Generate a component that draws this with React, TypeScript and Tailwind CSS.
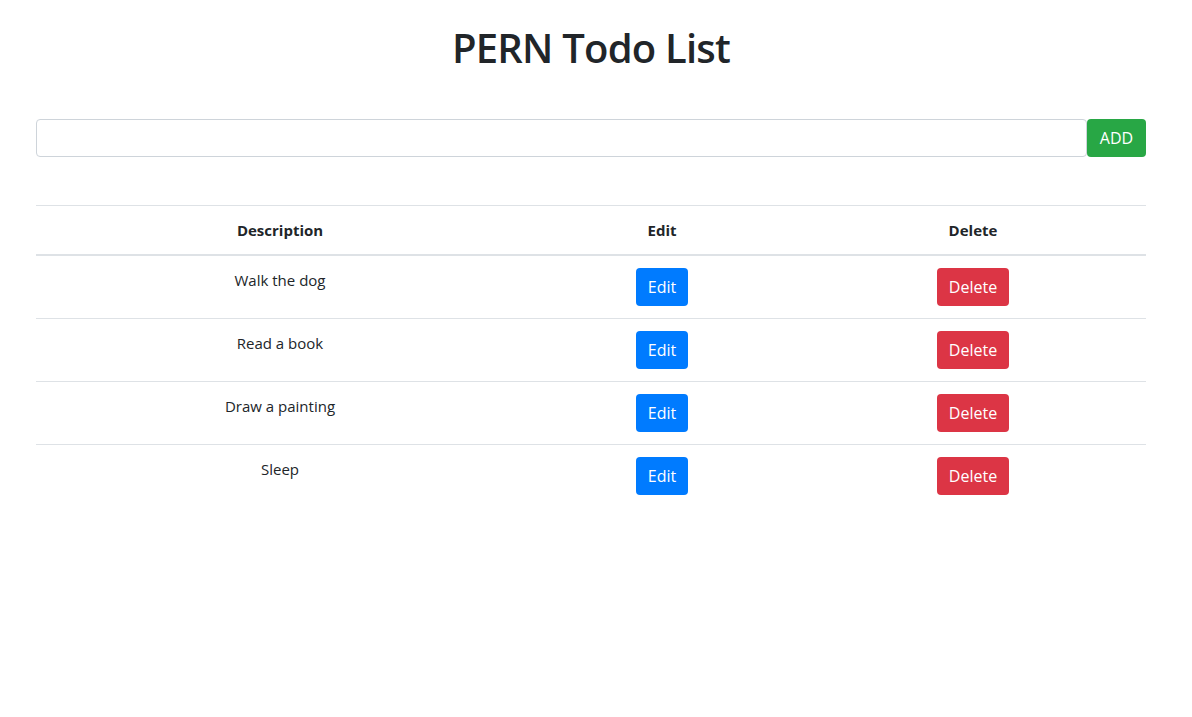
import React, { useState } from "react";

const initialTodos = [
  { id: 1, description: "Walk the dog" },
  { id: 2, description: "Read a book" },
  { id: 3, description: "Draw a painting" },
  { id: 4, description: "Sleep" },
];

export default function App() {
  const [todos, setTodos] = useState(initialTodos);
  const [description, setDescription] = useState("");

  const addTodo = (e: React.FormEvent) => {
    e.preventDefault();
    if (!description.trim()) return;
    setTodos((t) => [...t, { id: Date.now(), description }]);
    setDescription("");
  };

  const deleteTodo = (id: number) =>
    setTodos((t) => t.filter((todo) => todo.id !== id));

  return (
    <div
      className="min-h-[717px] bg-white text-[#212529]"
      style={{ fontFamily: '"Open Sans", "Noto Sans", sans-serif' }}
    >
      <div className="ml-[36px] w-[1110px]">
        {/* Title */}
        <h1 className="pt-[24px] text-center text-[40px] leading-[48px] font-semibold tracking-[-0.8px]">
          PERN Todo List
        </h1>

        {/* Add form */}
        <form className="mt-[47px] flex" onSubmit={addTodo}>
          <input
            type="text"
            value={description}
            onChange={(e) => setDescription(e.target.value)}
            className="h-[38px] flex-1 rounded-[4px] border border-[#ced4da] px-3 text-base outline-none"
          />
          <button
            type="submit"
            className="h-[38px] w-[59px] rounded-[4px] bg-[#28a745] text-base text-white"
          >
            ADD
          </button>
        </form>

        {/* Table */}
        <table className="mt-[48px] w-full border-collapse text-base">
          <thead>
            <tr>
              <th className="w-[488px] border-t border-b-2 border-[#dee2e6] px-3 py-3 text-center text-[15px] leading-6 font-bold">
                Description
              </th>
              <th className="w-[276px] border-t border-b-2 border-[#dee2e6] px-3 py-3 text-center text-[15px] leading-6 font-bold">
                Edit
              </th>
              <th className="w-[346px] border-t border-b-2 border-[#dee2e6] px-3 py-3 text-center text-[15px] leading-6 font-bold">
                Delete
              </th>
            </tr>
          </thead>
          <tbody>
            {todos.map((todo) => (
              <tr key={todo.id}>
                <td className="border-t border-[#dee2e6] px-3 py-3 text-center align-top text-[15px] leading-6">
                  {todo.description}
                </td>
                <td className="border-t border-[#dee2e6] px-3 py-3 text-center align-top">
                  <button className="h-[38px] w-[52px] rounded-[4px] bg-[#007bff] text-base text-white">
                    Edit
                  </button>
                </td>
                <td className="border-t border-[#dee2e6] px-3 py-3 text-center align-top">
                  <button
                    onClick={() => deleteTodo(todo.id)}
                    className="h-[38px] w-[72px] rounded-[4px] bg-[#dc3545] text-base text-white"
                  >
                    Delete
                  </button>
                </td>
              </tr>
            ))}
          </tbody>
        </table>
      </div>
    </div>
  );
}
